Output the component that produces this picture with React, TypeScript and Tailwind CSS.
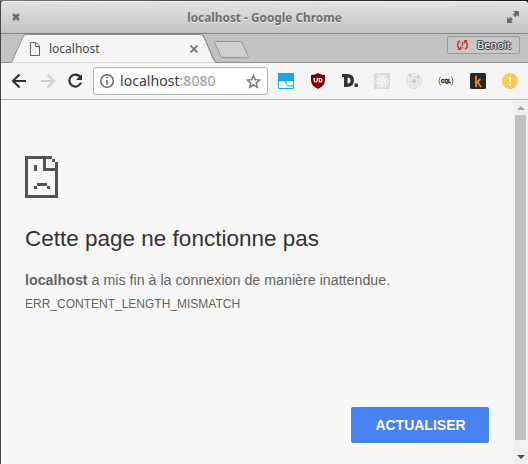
import type { ReactNode } from "react";

const UI = "font-['Noto_Sans',sans-serif]";

function Ext({ children }: { children: ReactNode }) {
  return (
    <svg className="h-4 w-4 shrink-0" viewBox="0 0 16 16">
      {children}
    </svg>
  );
}

function TitleBar() {
  return (
    <header className="flex h-[33px] items-center justify-between rounded-t-[4px] border-b border-[#858585] bg-linear-to-b from-[#e3e3e3] to-[#c3c3c3] pr-[9px] pl-[11px] shadow-[inset_0_1px_0_#f1f1f1]">
      <svg className="h-2 w-2" viewBox="0 0 8 8">
        <path d="M1 1L7 7M7 1L1 7" stroke="#6c6c6c" strokeWidth="2.5" />
      </svg>
      <h1 className={`${UI} pt-px pl-[2px] text-[11.85px] leading-none font-bold text-[#6e6e6e] [text-shadow:0_1px_0_#eee]`}>
        localhost - Google Chrome
      </h1>
      <svg className="h-3 w-3" viewBox="0 0 12 12" fill="#6b6b6b">
        <path d="M6 0H12V6L10.200 4.200L8.200 6.200L5.800 3.800L7.800 1.800ZM0 6L1.800 7.800L3.500 6.100L5.900 8.500L4.200 10.200L6 12H0Z" />
      </svg>
    </header>
  );
}

function TabStrip() {
  return (
    <div className="flex h-[29px] bg-[#c2c2c2]">
      <div className="relative h-[29px] w-[250px]">
        <svg className="absolute inset-0" width="250" height="29" viewBox="0 0 250 29">
          <path d="M0 28.5H10Q11 28 12 25L22 3Q23 .5 25 .5H200Q202 .5 203 3L212.500 25Q214 28.500 216 28.500H250" fill="#f5f5f5" stroke="#8d8d8d" />
          <path d="M217 27.500Q214.500 28 213 24L203.500 1H250V28H217Z" fill="#c2c2c2" />
          <path d="M202 1L212.500 25Q214 28.500 216 28.500H250" fill="none" stroke="#8d8d8d" />
          <path d="M214.500 7.500H239Q240.500 7.500 241.200 9L247 21.500Q248 23.500 246 23.500H222Q220.500 23.500 219.700 22L213.500 9Q213 7.500 214.500 7.500Z" fill="#d0d0d0" stroke="#929292" />
        </svg>
        <div className="relative flex h-full items-center pl-[29px]">
          <svg className="h-[14px] w-[10px]" viewBox="0 0 10 14">
            <path d="M.5 .5H6L9.500 4V13.500H.5ZM5.500 .5V4.500H9.500" fill="none" stroke="#616161" />
          </svg>
          <span className={`${UI} ml-[9px] w-[141px] text-[12px] leading-none text-[#444]`}>localhost</span>
          <svg className="mt-px h-2 w-2" viewBox="0 0 8 8">
            <path d="M.5 .5L7.500 7.500M7.500 .5L.5 7.500" stroke="#707070" strokeWidth="1.6" />
          </svg>
        </div>
      </div>
      <div className="flex grow justify-end border-b border-[#8d8d8d] pt-[2px] pr-[8px]">
        <button className="flex h-[18px] w-[73px] items-center rounded-[2px] border border-[#9b9b9b] bg-[#c6c6c6] pl-[8px]">
          <svg className="h-3 w-[13px]" viewBox="0 0 13 12">
            <path d="M4 1.800C1 3.500 1 7.500 3.300 9.700M9 10.200C12 8.500 12 4.500 9.700 2.300" fill="none" stroke="#c53c2f" strokeWidth="1.600" />
            <path d="M5.200 7V11H1.200ZM7.800 5V1H11.800Z" fill="#c53c2f" />
            <path d="M6.500 3V7M6.500 8V9.500" stroke="#c53c2f" strokeWidth="1.300" />
          </svg>
          <span className={`${UI} ml-[8px] -mt-px text-[11px] leading-none text-[#f4f4f4] [text-shadow:1px_0_0_#444,-1px_0_0_#444,0_1px_0_#444,0_-1px_0_#444,1px_1px_0_#777,-1px_-1px_0_#777]`}>
            Benoit
          </span>
        </button>
      </div>
    </div>
  );
}

function Extensions() {
  return (
    <div className="ml-[10px] flex gap-4">
      <Ext>
        <rect width="16" height="16" rx="1" fill="#16a5ee" />
        <path d="M1 8H6.500L8.500 12Q9.500 14 15 13.500V15H1Z" fill="#f8fcff" />
        <path d="M8 8H15V12.500H10.500Q9.500 12.500 9 11Z" fill="#f8fcff" />
      </Ext>
      <Ext>
        <path d="M8 0Q11 2 15 2V7Q15 13 8 16Q1 13 1 7V2Q5 2 8 0Z" fill="#800000" />
        <path d="M4.200 5V7.500Q4.200 9 5.700 9Q7.200 9 7.200 7.500V5M9.200 9V5.500H10Q12 5.500 12 7.200Q12 9 10 9Z" fill="none" stroke="#fff" strokeWidth="1.200" />
      </Ext>
      <Ext>
        <path fillRule="evenodd" d="M0 1H5Q12 1 12 7.500Q12 14 5 14H2V4H0ZM5.500 4.500V10.500Q8.500 10.500 8.500 7.500Q8.500 4.500 5.500 4.500Z" fill="#333" />
        <rect x="12.500" y="10.500" width="3.500" height="3.500" rx=".8" fill="#333" />
      </Ext>
      <Ext>
        <rect width="16" height="16" fill="#dcdcdc" />
        <g fill="none" stroke="#fafafa" strokeWidth=".9">
          <ellipse cx="8" cy="8" rx="6.500" ry="2.500" />
          <ellipse cx="8" cy="8" rx="6.500" ry="2.500" transform="rotate(60 8 8)" />
          <ellipse cx="8" cy="8" rx="6.500" ry="2.500" transform="rotate(120 8 8)" />
        </g>
        <circle cx="8" cy="8" r="1.300" fill="#fafafa" />
      </Ext>
      <Ext>
        <g fill="none" stroke="#d3d3d3">
          <circle cx="8" cy="8" r="7.300" />
          <circle cx="8" cy="8" r="4.500" strokeWidth="1.200" />
        </g>
        <circle cx="8" cy="8" r="2.500" fill="#cecece" />
        <circle cx="4" cy="2" r="1.600" fill="#c9c9c9" />
        <circle cx="12" cy="4" r="1.300" fill="#c9c9c9" />
      </Ext>
      <Ext>
        <path d="M3 4Q1.500 4 1.500 5.500V7L.5 8L1.500 9V10.500Q1.500 12 3 12M13 4Q14.500 4 14.500 5.500V7L15.500 8L14.500 9V10.500Q14.500 12 13 12" fill="none" stroke="#6a6a6a" />
        <text x="3" y="9.800" fontSize="4.800" fontWeight="bold" fontFamily="Liberation Sans, sans-serif" fill="#222" stroke="#222" strokeWidth=".4" textLength="10" lengthAdjust="spacingAndGlyphs">CQL</text>
      </Ext>
      <Ext>
        <rect width="16" height="16" rx="1.500" fill="#262626" />
        <path d="M6 2.500V14M6.500 9.500L10.500 6M7 8.500L11 14" fill="none" stroke="#ef8215" strokeWidth="1.900" />
      </Ext>
      <Ext>
        <circle cx="8" cy="8" r="8" fill="#f8cb54" />
        <path d="M7 4H9V9H7ZM7 10.500H9V12.500H7Z" fill="#fff" />
      </Ext>
    </div>
  );
}

function Toolbar() {
  return (
    <div className="flex h-[37px] items-center border-b border-[#b6b6b6] bg-[#f5f5f5] pl-[10px]">
      <svg className="h-4 w-4" viewBox="0 0 16 16" fill="none" stroke="#2f2f2f" strokeWidth="2">
        <path d="M15 8H2.500M8.500 1.500L2 8L8.500 14.500" />
      </svg>
      <svg className="ml-[13px] h-4 w-4" viewBox="0 0 16 16" fill="none" stroke="#cfcfcf" strokeWidth="2">
        <path d="M1 8H13.500M7.500 1.500L14 8L7.500 14.500" />
      </svg>
      <svg className="ml-[11px] h-4 w-4" viewBox="0 0 16 16">
        <path d="M13.500 4.500A6 6 0 1 0 14 9.500" fill="none" stroke="#2f2f2f" strokeWidth="2.200" />
        <path d="M15 1V7H9Z" fill="#2f2f2f" />
      </svg>
      <div className="ml-[10px] flex h-7 w-[175px] items-center rounded-[3px] border border-[#b4b4b4] bg-white pl-[6px]">
        <svg className="h-[14px] w-[14px]" viewBox="0 0 14 14">
          <circle cx="7" cy="7" r="6.250" fill="none" stroke="#676767" strokeWidth="1.500" />
          <path d="M6.250 6H7.750V11H6.250ZM6.250 3H7.750V4.600H6.250Z" fill="#676767" />
        </svg>
        <span className={`${UI} ml-[6px] w-[126px] text-[14.1px] leading-none text-[#3c3c3c]`}>
          localhost<span className="text-[#999]">:8080</span>
        </span>
        <svg className="h-[15px] w-[15px] shrink-0" viewBox="0 0 15 15">
          <path d="M7.500 1.500L9.200 5.600L13.700 6L10.300 8.900L11.300 13.200L7.500 10.900L3.700 13.200L4.700 8.900L1.300 6L5.800 5.600Z" fill="none" stroke="#747474" strokeWidth="1.400" />
        </svg>
      </div>
      <Extensions />
    </div>
  );
}

function ErrorPage() {
  return (
    <main className="flex grow bg-[#f7f7f7] font-['Liberation_Sans',sans-serif]">
      <section className="flex grow flex-col pt-14 pl-6 text-[#646464]">
        <svg className="h-[42px] w-[33px]" viewBox="0 0 33 42" fill="#535353" shapeRendering="crispEdges">
          <path d="M0 0H27V3H21V12H30V6H33V42H0ZM3 3V39H30V15H18V3Z" fillRule="evenodd" />
          <path d="M27 3H30V6H27ZM9 9H12V15H9ZM12 27H22V30H12ZM9 30H12V33H9ZM22 30H25V33H22Z" />
        </svg>
        <h2 className="mt-[26px] text-[22.5px] leading-[29px] text-[#333]">Cette page ne fonctionne pas</h2>
        <p className="mt-[17px] text-[14.25px] leading-[21px]">
          <strong>localhost</strong> a mis fin à la connexion de manière inattendue.
        </p>
        <p className="mt-[4px] text-[12px] leading-[18px]">ERR_CONTENT_LENGTH_MISMATCH</p>
        <button className="mt-auto mr-6 mb-[21px] h-9 w-[138px] self-end rounded-[2px] bg-[#4682f2] pl-px text-[14px] font-bold text-[#fafafa]">
          ACTUALISER
        </button>
      </section>
      <div className="flex w-[15px] flex-col items-center bg-[#f0f0f0]">
        <svg className="mt-[6px] h-1 w-2 shrink-0" viewBox="0 0 8 4"><path d="M0 4L4 0L8 4Z" fill="#a0a0a0" /></svg>
        <div className="mt-[5px] h-[325px] w-[11px] shrink-0 bg-[#c1c1c1]" />
        <svg className="mt-[15px] h-1 w-2 shrink-0" viewBox="0 0 8 4"><path d="M0 0H8L4 4Z" fill="#505050" /></svg>
      </div>
    </main>
  );
}

export default function App() {
  return (
    <div className="h-[464px] w-[528px] bg-linear-to-r from-[#77747a] via-[#2a262b] via-[67%] to-[#1c181d] pt-px">
      <div className="flex h-[463px] flex-col border-l border-[#48464a]">
        <TitleBar />
        <TabStrip />
        <Toolbar />
        <ErrorPage />
      </div>
    </div>
  );
}
